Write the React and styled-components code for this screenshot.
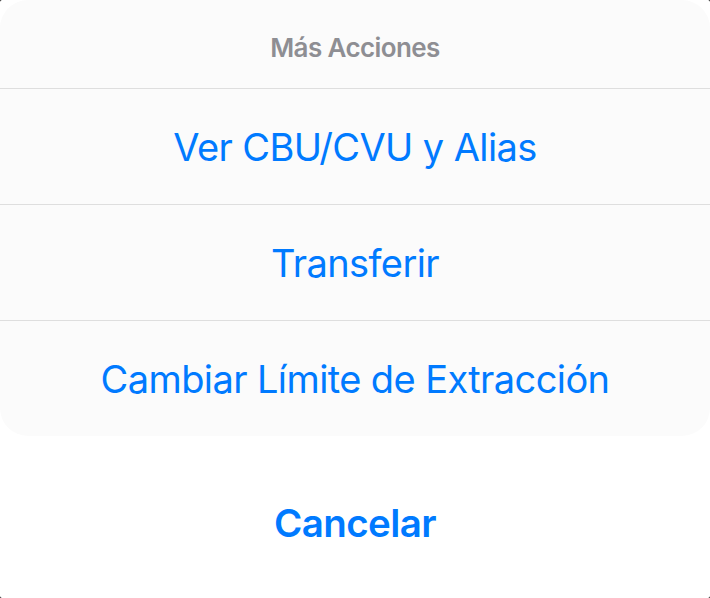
import React from "react";
import styled, { createGlobalStyle } from "styled-components";

const GlobalStyle = createGlobalStyle`
  html, body {
    margin: 0;
    padding: 0;
    background: #000;
  }
  body {
    font-family: Inter, "Noto Sans", "Liberation Sans", sans-serif;
    -webkit-font-smoothing: antialiased;
  }
`;

const actions = ["Ver CBU/CVU y Alias", "Transferir", "Cambiar Límite de Extracción"];

const App = () => {
  return (
    <>
      <GlobalStyle />
      <Screen>
        <Sheet>
          <Title>Más Acciones</Title>
          {actions.map((label) => (
            <Action key={label}>{label}</Action>
          ))}
        </Sheet>
        <CancelButton>Cancelar</CancelButton>
      </Screen>
    </>
  );
};

export default App;

const Screen = styled.div`
  height: 598px;
  background: #fff;
  border-radius: 2px;
  overflow: hidden;
  display: flex;
  flex-direction: column;
`;

const Sheet = styled.div`
  background: #fbfbfb;
  border-radius: 28px;
  display: flex;
  flex-direction: column;
  overflow: hidden;
`;

const Title = styled.div`
  height: 88px;
  box-sizing: border-box;
  padding-top: 6px;
  display: flex;
  align-items: center;
  justify-content: center;
  font-size: 26px;
  font-weight: 600;
  color: #8e8e93;
  letter-spacing: -0.6px;
`;

const Action = styled.button`
  height: 116px;
  border: none;
  border-top: 1px solid #dedede;
  background: transparent;
  display: flex;
  align-items: center;
  justify-content: center;
  font-family: inherit;
  font-size: 38px;
  font-weight: 400;
  color: #007aff;
  letter-spacing: -0.6px;
  padding: 0;
  cursor: pointer;
`;

const CancelButton = styled(Action)`
  flex: 1;
  height: auto;
  margin-top: 16px;
  border-top: none;
  font-size: 38.5px;
  font-weight: 600;
  padding-bottom: 4px;
`;
